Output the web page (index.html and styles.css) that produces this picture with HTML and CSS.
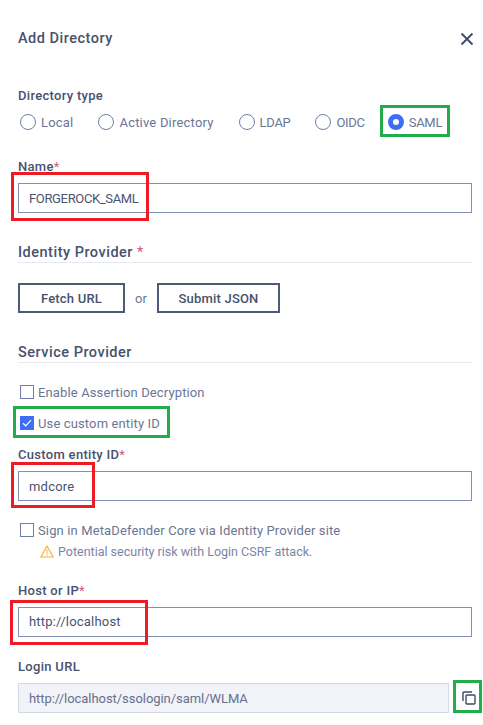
FILE: index.html
```html
<!DOCTYPE html>
<html lang="en">
<head>
<meta charset="utf-8">
<title>Add Directory</title>
<link rel="stylesheet" href="styles.css">
</head>
<body>
<div class="dialog">
  <header class="head">
    <h1 class="title">Add Directory</h1>
    <svg class="close" width="14" height="14" viewBox="0 0 14 14"><path d="M1.5 1.5l11 11M12.5 1.5l-11 11" fill="none" stroke="#3d4a66" stroke-width="1.8"/></svg>
  </header>

  <div class="label type-label">Directory type</div>
  <div class="radios">
    <label class="radio r1"><span class="dot"></span>Local</label>
    <label class="radio r2"><span class="dot"></span>Active Directory</label>
    <label class="radio r3"><span class="dot"></span>LDAP</label>
    <label class="radio r4"><span class="dot"></span>OIDC</label>
    <label class="radio r5"><span class="dot on"></span>SAML</label>
  </div>

  <div class="label name-label">Name<span class="req">*</span></div>
  <div class="input caps">FORGEROCK_SAML</div>

  <div class="section idp">Identity Provider <span class="req">*</span></div>
  <div class="buttons">
    <div class="btn fetch">Fetch URL</div>
    <span class="or">or</span>
    <div class="btn submit">Submit JSON</div>
  </div>

  <div class="section sp">Service Provider</div>
  <div class="check c1"><span class="box"></span>Enable Assertion Decryption</div>
  <div class="check c2"><span class="box on"><svg width="14" height="14" viewBox="0 0 14 14"><path d="M3 7.2l2.8 2.6L11 4.2" fill="none" stroke="#fff" stroke-width="1.2"/></svg></span>Use custom entity ID</div>

  <div class="label custom-label">Custom entity ID<span class="req">*</span></div>
  <div class="input">mdcore</div>

  <div class="check c3"><span class="box"></span>Sign in MetaDefender Core via Identity Provider site</div>
  <div class="warn">
    <svg width="14" height="13" viewBox="0 0 14 13"><path d="M7 1L.8 12h12.4z" fill="none" stroke="#f5b041" stroke-width="1.2" stroke-linejoin="round"/><path d="M7 4.6v4M7 9.6v1.2" stroke="#f5b041" stroke-width="1.1"/></svg>
    <span>Potential security risk with Login CSRF attack.</span>
  </div>

  <div class="label host-label">Host or IP<span class="req">*</span></div>
  <div class="input host">http://localhost</div>

  <div class="label login-label">Login URL</div>
  <div class="url-row">
    <div class="input disabled">http://localhost/ssologin/saml/WLMA</div>
    <svg class="copy" width="14" height="14" viewBox="0 0 14 14"><rect x="4" y="4" width="9" height="9" rx="1" fill="none" stroke="#3d4a66" stroke-width="1.4"/><path d="M10 1H2a1 1 0 0 0-1 1v8" fill="none" stroke="#3d4a66" stroke-width="1.4"/></svg>
  </div>
</div>

<div class="mark green m1"></div>
<div class="mark red m2"></div>
<div class="mark green m3"></div>
<div class="mark red m4"></div>
<div class="mark red m5"></div>
<div class="mark green m6"></div>
</body>
</html>
```
FILE: styles.css
```css
* { box-sizing: border-box; }
html, body { margin: 0; height: 725px; overflow: hidden; background: #fff; }
body { position: relative; font-family: Roboto, "Liberation Sans", sans-serif; font-size: 13px; color: #47526e; }
.dialog { padding: 29px 11px 0 18px; }
.head { display: flex; justify-content: space-between; align-items: center; height: 18px; }
.title { margin: 0; font-size: 14.5px; font-weight: 500; letter-spacing: .5px; }
.close { margin-top: 1px; margin-right: -2px; }
.label { height: 18px; line-height: 18px; font-size: 13px; font-weight: 500; letter-spacing: .3px; }
.req { color: #d6587a; font-weight: 400; }
.type-label { margin-top: 40px; }
.radios { display: flex; margin-top: 7px; height: 20px; align-items: center; }
.radio { display: flex; align-items: center; color: #6b7694; letter-spacing: .2px; white-space: nowrap; }
.dot { width: 16px; height: 16px; border: 1px solid #6f7ea6; border-radius: 50%; margin: 0 5px 0 2px; background: #fff; flex: none; }
.dot.on { border: 5px solid #3d6ef5; }
.r2 { margin-left: 23px; }
.r3 { margin-left: 23px; letter-spacing: -.3px; }
.r4 { margin-left: 23px; letter-spacing: -.3px; }
.r5 { margin-left: 21px; letter-spacing: -.3px; }
.name-label { margin-top: 26px; }
.input { height: 30px; line-height: 29px; border: 1px solid #8590b5; padding: 0 10px; margin-top: 7px; color: #4a5470; letter-spacing: .2px; }
.caps { letter-spacing: -.35px; }
.host { line-height: 27px; }
.section { height: 22px; line-height: 24px; font-size: 14.5px; font-weight: 500; letter-spacing: .5px; border-bottom: 1px solid #e6e9f0; }
.idp { margin-top: 28px; }
.buttons { display: flex; align-items: center; margin-top: 20px; }
.btn { height: 30px; line-height: 27px; border: 2px solid #4f5a78; text-align: center; font-weight: 500; letter-spacing: .2px; }
.fetch { width: 107px; } .submit { width: 123px; }
.or { width: 32px; text-align: center; color: #6b7694; }
.sp { margin-top: 28px; }
.check { display: flex; align-items: center; height: 18px; color: #6b7694; letter-spacing: .13px; }
.box { width: 14px; height: 14px; border: 1px solid #6f7ea6; margin: 0 4px 0 2px; display: block; flex: none; }
.box.on { background: #3d6ef5; border: 0; }
.box svg { display: block; }
.c1 { margin-top: 20px; } .c2 { margin-top: 13px; }
.custom-label { margin-top: 14px; }
.c3 { margin-top: 20px; }
.warn { display: flex; align-items: center; gap: 4px; margin: 4px 0 0 22px; height: 16px; font-size: 12.5px; color: #7a85a6; letter-spacing: 0; }
.host-label { margin-top: 23px; }
.login-label { margin-top: 21px; }
.url-row { display: flex; align-items: center; }
.disabled { width: 431px; flex: none; background: #f2f3f8; border-color: #d5d9e6; color: #666f8c; letter-spacing: -.05px; }
.copy { margin: 7px 0 0 13px; flex: none; }
.mark { position: absolute; border: 3px solid; }
.green { border-color: #22ac4c; }
.red { border-color: #ed1c24; }
.m1 { left: 380px; top: 105px; width: 70px; height: 32px; }
.m2 { left: 11px; top: 172px; width: 138px; height: 49px; }
.m3 { left: 13px; top: 406px; width: 157px; height: 32px; }
.m4 { left: 11px; top: 462px; width: 84px; height: 46px; }
.m5 { left: 10px; top: 600px; width: 138px; height: 45px; }
.m6 { left: 453px; top: 680px; width: 29px; height: 33px; }
```
